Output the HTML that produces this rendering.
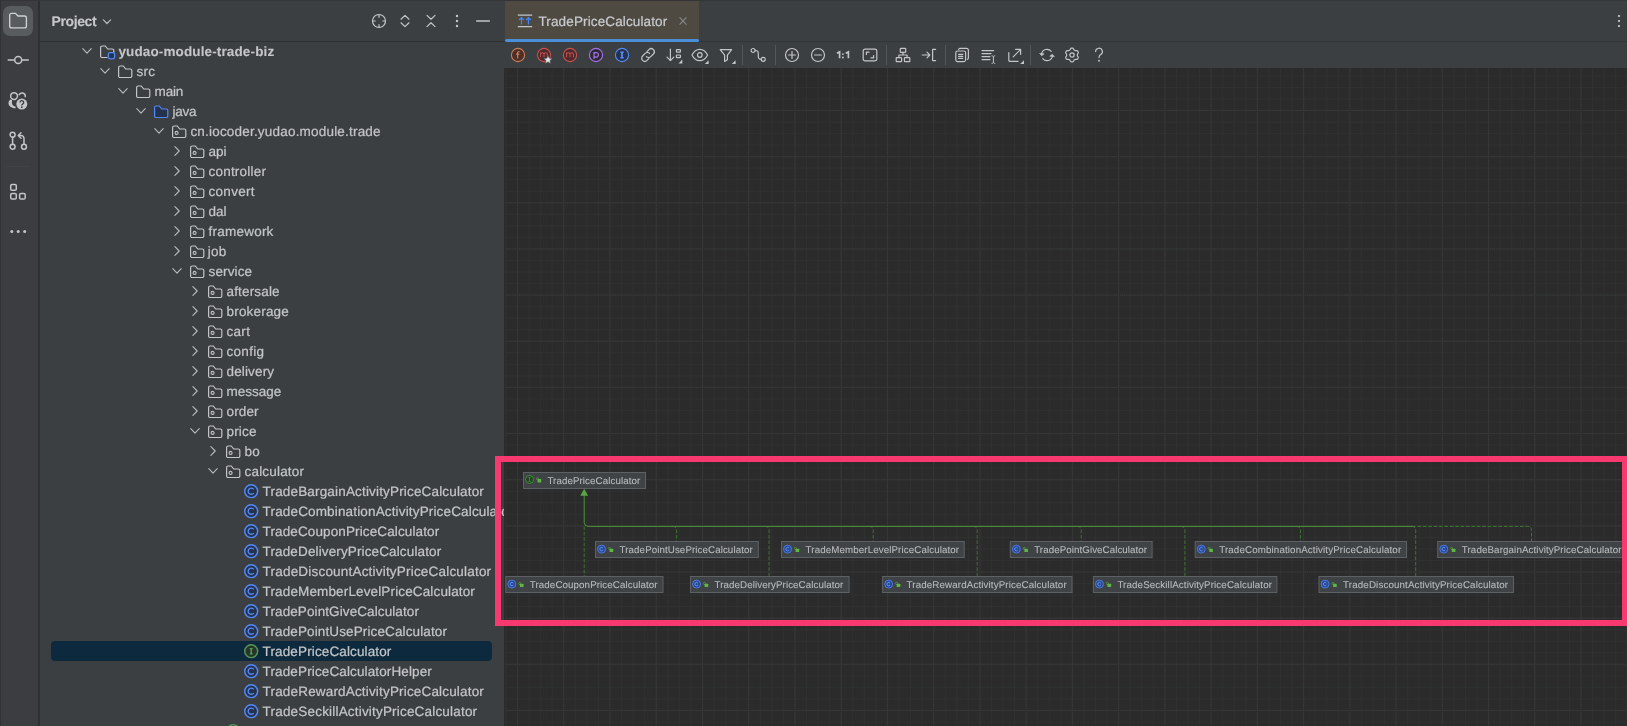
<!DOCTYPE html>
<html><head><meta charset="utf-8"><title>TradePriceCalculator</title>
<style>
html,body{margin:0;padding:0;background:#2b2b2b;}
body{width:1627px;height:726px;position:relative;overflow:hidden;font-family:"Liberation Sans",sans-serif;font-size:13px;color:#c3c5c8;text-rendering:geometricPrecision;}
#root{position:absolute;left:0;top:0;width:1627px;height:726px;overflow:hidden;background:#2b2b2b;will-change:transform}
svg{overflow:visible}
.abs{position:absolute}
</style></head><body><div id="root">
<!-- editor canvas -->
<div class="abs" style="left:504px;top:68px;width:1123px;height:658px;background:#2b2b2b"></div>
<svg style="position:absolute;left:505px;top:68px" width="1122" height="658" viewBox="505 68 1122 658">
<defs>
<pattern id="gmin" x="517.0" y="110.0" width="11.56" height="11.5375" patternUnits="userSpaceOnUse">
<path d="M0.5 0 V11.5375" stroke="#2f3030" stroke-width="1"/><path d="M0 0.5 H11.56" stroke="#2f3030" stroke-width="1"/>
</pattern>
<pattern id="gmaj" x="517.0" y="110.0" width="46.24" height="46.15" patternUnits="userSpaceOnUse">
<path d="M0.5 0 V46.15" stroke="#3b3c3c" stroke-width="1" stroke-dasharray="1 1"/><path d="M0 0.5 H46.24" stroke="#3b3c3c" stroke-width="1" stroke-dasharray="1 1"/>
</pattern>
</defs>
<rect x="505" y="68" width="1122" height="658" fill="url(#gmin)"/>
<rect x="505" y="68" width="1122" height="658" fill="url(#gmaj)"/>
</svg>
<svg style="position:absolute;left:0;top:0" width="1627" height="726" viewBox="0 0 1627 726"><path d="M584.2 495 V522.4 Q584.2 526.4 588.2 526.4 H1412" fill="none" stroke="#4a9539" stroke-width="1"/><path d="M1412 526.4 H1527.5 Q1531.5 526.4 1531.5 530.4 V541.5" fill="none" stroke="#4a9539" stroke-width="0.95" stroke-opacity="0.72" stroke-dasharray="3.7 1.7"/><path d="M584.2 526.4 V576" fill="none" stroke="#4a9539" stroke-width="0.95" stroke-opacity="0.72" stroke-dasharray="3.7 1.7"/><path d="M672.6 526.4 Q676.6 526.4 676.6 530.4 V541.5" fill="none" stroke="#4a9539" stroke-width="0.95" stroke-opacity="0.72" stroke-dasharray="3.7 1.7"/><path d="M765.1 526.4 Q769.1 526.4 769.1 530.4 V576" fill="none" stroke="#4a9539" stroke-width="0.95" stroke-opacity="0.72" stroke-dasharray="3.7 1.7"/><path d="M869.2 526.4 Q873.2 526.4 873.2 530.4 V541.5" fill="none" stroke="#4a9539" stroke-width="0.95" stroke-opacity="0.72" stroke-dasharray="3.7 1.7"/><path d="M973.2 526.4 Q977.2 526.4 977.2 530.4 V576" fill="none" stroke="#4a9539" stroke-width="0.95" stroke-opacity="0.72" stroke-dasharray="3.7 1.7"/><path d="M1077.2 526.4 Q1081.2 526.4 1081.2 530.4 V541.5" fill="none" stroke="#4a9539" stroke-width="0.95" stroke-opacity="0.72" stroke-dasharray="3.7 1.7"/><path d="M1180.9 526.4 Q1184.9 526.4 1184.9 530.4 V576" fill="none" stroke="#4a9539" stroke-width="0.95" stroke-opacity="0.72" stroke-dasharray="3.7 1.7"/><path d="M1296.5 526.4 Q1300.5 526.4 1300.5 530.4 V541.5" fill="none" stroke="#4a9539" stroke-width="0.95" stroke-opacity="0.72" stroke-dasharray="3.7 1.7"/><path d="M1411.7 526.4 Q1415.7 526.4 1415.7 530.4 V576" fill="none" stroke="#4a9539" stroke-width="0.95" stroke-opacity="0.72" stroke-dasharray="3.7 1.7"/><path d="M584.2 488.8 L588.1 495.7 H580.3 Z" fill="#57a642"/><rect x="523.50" y="472.5" width="122.00" height="16" fill="#404345" stroke="#5e6164" stroke-width="1"/><g transform="translate(524.55 474.40)"><circle cx="5" cy="5" r="4" fill="#274028" stroke="#45913e" stroke-width="0.9"/><path d="M4 3 h2 M4 7 h2 M5 3 v4" fill="none" stroke="#45913e" stroke-width="0.85"/></g><g transform="translate(536.00 477.20)"><circle cx="1.45" cy="1.5" r="1.05" fill="none" stroke="#4f9a3c" stroke-width="0.8"/><rect x="1.6" y="1.9" width="3.6" height="3.3" rx="0.4" fill="#5db645"/></g><rect x="595.50" y="541.5" width="162.80" height="16" fill="#404345" stroke="#5e6164" stroke-width="1"/><g transform="translate(596.55 544.10)"><circle cx="5" cy="5" r="4" fill="#2a4a9a" stroke="#4a78d8" stroke-width="1"/><path d="M6.35 4 a1.7 1.7 0 1 0 0 2" fill="none" stroke="#6f9cf0" stroke-width="0.85"/></g><g transform="translate(608.00 546.90)"><circle cx="1.45" cy="1.5" r="1.05" fill="none" stroke="#4f9a3c" stroke-width="0.8"/><rect x="1.6" y="1.9" width="3.6" height="3.3" rx="0.4" fill="#5db645"/></g><rect x="781.50" y="541.5" width="182.70" height="16" fill="#404345" stroke="#5e6164" stroke-width="1"/><g transform="translate(782.55 544.10)"><circle cx="5" cy="5" r="4" fill="#2a4a9a" stroke="#4a78d8" stroke-width="1"/><path d="M6.35 4 a1.7 1.7 0 1 0 0 2" fill="none" stroke="#6f9cf0" stroke-width="0.85"/></g><g transform="translate(794.00 546.90)"><circle cx="1.45" cy="1.5" r="1.05" fill="none" stroke="#4f9a3c" stroke-width="0.8"/><rect x="1.6" y="1.9" width="3.6" height="3.3" rx="0.4" fill="#5db645"/></g><rect x="1010.30" y="541.5" width="141.80" height="16" fill="#404345" stroke="#5e6164" stroke-width="1"/><g transform="translate(1011.35 544.10)"><circle cx="5" cy="5" r="4" fill="#2a4a9a" stroke="#4a78d8" stroke-width="1"/><path d="M6.35 4 a1.7 1.7 0 1 0 0 2" fill="none" stroke="#6f9cf0" stroke-width="0.85"/></g><g transform="translate(1022.80 546.90)"><circle cx="1.45" cy="1.5" r="1.05" fill="none" stroke="#4f9a3c" stroke-width="0.8"/><rect x="1.6" y="1.9" width="3.6" height="3.3" rx="0.4" fill="#5db645"/></g><rect x="1195.20" y="541.5" width="211.30" height="16" fill="#404345" stroke="#5e6164" stroke-width="1"/><g transform="translate(1196.25 544.10)"><circle cx="5" cy="5" r="4" fill="#2a4a9a" stroke="#4a78d8" stroke-width="1"/><path d="M6.35 4 a1.7 1.7 0 1 0 0 2" fill="none" stroke="#6f9cf0" stroke-width="0.85"/></g><g transform="translate(1207.70 546.90)"><circle cx="1.45" cy="1.5" r="1.05" fill="none" stroke="#4f9a3c" stroke-width="0.8"/><rect x="1.6" y="1.9" width="3.6" height="3.3" rx="0.4" fill="#5db645"/></g><rect x="1437.70" y="541.5" width="193.80" height="16" fill="#404345" stroke="#5e6164" stroke-width="1"/><g transform="translate(1438.75 544.10)"><circle cx="5" cy="5" r="4" fill="#2a4a9a" stroke="#4a78d8" stroke-width="1"/><path d="M6.35 4 a1.7 1.7 0 1 0 0 2" fill="none" stroke="#6f9cf0" stroke-width="0.85"/></g><g transform="translate(1450.20 546.90)"><circle cx="1.45" cy="1.5" r="1.05" fill="none" stroke="#4f9a3c" stroke-width="0.8"/><rect x="1.6" y="1.9" width="3.6" height="3.3" rx="0.4" fill="#5db645"/></g><rect x="505.80" y="576.5" width="157.20" height="16" fill="#404345" stroke="#5e6164" stroke-width="1"/><g transform="translate(506.85 579.10)"><circle cx="5" cy="5" r="4" fill="#2a4a9a" stroke="#4a78d8" stroke-width="1"/><path d="M6.35 4 a1.7 1.7 0 1 0 0 2" fill="none" stroke="#6f9cf0" stroke-width="0.85"/></g><g transform="translate(518.30 581.90)"><circle cx="1.45" cy="1.5" r="1.05" fill="none" stroke="#4f9a3c" stroke-width="0.8"/><rect x="1.6" y="1.9" width="3.6" height="3.3" rx="0.4" fill="#5db645"/></g><rect x="690.50" y="576.5" width="158.60" height="16" fill="#404345" stroke="#5e6164" stroke-width="1"/><g transform="translate(691.55 579.10)"><circle cx="5" cy="5" r="4" fill="#2a4a9a" stroke="#4a78d8" stroke-width="1"/><path d="M6.35 4 a1.7 1.7 0 1 0 0 2" fill="none" stroke="#6f9cf0" stroke-width="0.85"/></g><g transform="translate(703.00 581.90)"><circle cx="1.45" cy="1.5" r="1.05" fill="none" stroke="#4f9a3c" stroke-width="0.8"/><rect x="1.6" y="1.9" width="3.6" height="3.3" rx="0.4" fill="#5db645"/></g><rect x="882.60" y="576.5" width="189.40" height="16" fill="#404345" stroke="#5e6164" stroke-width="1"/><g transform="translate(883.65 579.10)"><circle cx="5" cy="5" r="4" fill="#2a4a9a" stroke="#4a78d8" stroke-width="1"/><path d="M6.35 4 a1.7 1.7 0 1 0 0 2" fill="none" stroke="#6f9cf0" stroke-width="0.85"/></g><g transform="translate(895.10 581.90)"><circle cx="1.45" cy="1.5" r="1.05" fill="none" stroke="#4f9a3c" stroke-width="0.8"/><rect x="1.6" y="1.9" width="3.6" height="3.3" rx="0.4" fill="#5db645"/></g><rect x="1093.40" y="576.5" width="183.50" height="16" fill="#404345" stroke="#5e6164" stroke-width="1"/><g transform="translate(1094.45 579.10)"><circle cx="5" cy="5" r="4" fill="#2a4a9a" stroke="#4a78d8" stroke-width="1"/><path d="M6.35 4 a1.7 1.7 0 1 0 0 2" fill="none" stroke="#6f9cf0" stroke-width="0.85"/></g><g transform="translate(1105.90 581.90)"><circle cx="1.45" cy="1.5" r="1.05" fill="none" stroke="#4f9a3c" stroke-width="0.8"/><rect x="1.6" y="1.9" width="3.6" height="3.3" rx="0.4" fill="#5db645"/></g><rect x="1319.00" y="576.5" width="194.50" height="16" fill="#404345" stroke="#5e6164" stroke-width="1"/><g transform="translate(1320.05 579.10)"><circle cx="5" cy="5" r="4" fill="#2a4a9a" stroke="#4a78d8" stroke-width="1"/><path d="M6.35 4 a1.7 1.7 0 1 0 0 2" fill="none" stroke="#6f9cf0" stroke-width="0.85"/></g><g transform="translate(1331.50 581.90)"><circle cx="1.45" cy="1.5" r="1.05" fill="none" stroke="#4f9a3c" stroke-width="0.8"/><rect x="1.6" y="1.9" width="3.6" height="3.3" rx="0.4" fill="#5db645"/></g></svg>

<span style="position:absolute;left:547.4px;top:472.10px;line-height:20px;height:20px;font-size:9.75px;font-weight:400;color:#b6b9bd;letter-spacing:0.084px;white-space:pre;-webkit-text-stroke:0.1px #b6b9bd">TradePriceCalculator</span><span style="position:absolute;left:619.6px;top:541.10px;line-height:20px;height:20px;font-size:9.75px;font-weight:400;color:#b6b9bd;letter-spacing:0.086px;white-space:pre;-webkit-text-stroke:0.1px #b6b9bd">TradePointUsePriceCalculator</span><span style="position:absolute;left:805.6px;top:541.10px;line-height:20px;height:20px;font-size:9.75px;font-weight:400;color:#b6b9bd;letter-spacing:0.107px;white-space:pre;-webkit-text-stroke:0.1px #b6b9bd">TradeMemberLevelPriceCalculator</span><span style="position:absolute;left:1034.2px;top:541.10px;line-height:20px;height:20px;font-size:9.75px;font-weight:400;color:#b6b9bd;letter-spacing:0.072px;white-space:pre;-webkit-text-stroke:0.1px #b6b9bd">TradePointGiveCalculator</span><span style="position:absolute;left:1219.2px;top:541.10px;line-height:20px;height:20px;font-size:9.75px;font-weight:400;color:#b6b9bd;letter-spacing:0.135px;white-space:pre;-webkit-text-stroke:0.1px #b6b9bd">TradeCombinationActivityPriceCalculator</span><span style="position:absolute;left:1461.8px;top:541.10px;line-height:20px;height:20px;font-size:9.75px;font-weight:400;color:#b6b9bd;letter-spacing:0.117px;white-space:pre;-webkit-text-stroke:0.1px #b6b9bd">TradeBargainActivityPriceCalculator</span><span style="position:absolute;left:529.8px;top:576.10px;line-height:20px;height:20px;font-size:9.75px;font-weight:400;color:#b6b9bd;letter-spacing:0.097px;white-space:pre;-webkit-text-stroke:0.1px #b6b9bd">TradeCouponPriceCalculator</span><span style="position:absolute;left:714.5px;top:576.10px;line-height:20px;height:20px;font-size:9.75px;font-weight:400;color:#b6b9bd;letter-spacing:0.088px;white-space:pre;-webkit-text-stroke:0.1px #b6b9bd">TradeDeliveryPriceCalculator</span><span style="position:absolute;left:906.6px;top:576.10px;line-height:20px;height:20px;font-size:9.75px;font-weight:400;color:#b6b9bd;letter-spacing:0.132px;white-space:pre;-webkit-text-stroke:0.1px #b6b9bd">TradeRewardActivityPriceCalculator</span><span style="position:absolute;left:1117.4px;top:576.10px;line-height:20px;height:20px;font-size:9.75px;font-weight:400;color:#b6b9bd;letter-spacing:0.126px;white-space:pre;-webkit-text-stroke:0.1px #b6b9bd">TradeSeckillActivityPriceCalculator</span><span style="position:absolute;left:1343.1px;top:576.10px;line-height:20px;height:20px;font-size:9.75px;font-weight:400;color:#b6b9bd;letter-spacing:0.141px;white-space:pre;-webkit-text-stroke:0.1px #b6b9bd">TradeDiscountActivityPriceCalculator</span>
<!-- top bars -->
<div class="abs" style="left:504px;top:0;width:1123px;height:68px;background:#3c3f41"></div>
<div class="abs" style="left:504px;top:41px;width:1123px;height:1px;background:#323537"></div>
<div style="position:absolute;left:505px;top:1px;width:194px;height:39px;background:#4e4a41"></div><div style="position:absolute;left:505px;top:38.6px;width:194px;height:3.2px;border-radius:1.6px;background:#4a8fd8"></div><svg style="position:absolute;left:517px;top:13px" width="16" height="16" viewBox="0 0 16 16"><path d="M0.8 2.1 h14.4 M0.8 13.6 h14.4" stroke="#c3c5c8" stroke-width="1.1"/><path d="M4.45 11.6 v-6.6 M11.45 11.6 v-6.6 M2.05 7 l2.4 -2.4 l2.4 2.4 M9.05 7 l2.4 -2.4 l2.4 2.4" fill="none" stroke="#4486f2" stroke-width="1.2"/></svg><svg style="position:absolute;left:678px;top:15.7px" width="10" height="10" viewBox="0 0 10 10"><path d="M1.6 1.4 L8.4 8.6 M8.4 1.4 L1.6 8.6" stroke="#85888c" stroke-width="1.1"/></svg><svg style="position:absolute;left:1611px;top:12.6px" width="16" height="16" viewBox="0 0 16 16"><circle cx="8" cy="3" r="1.1" fill="#d0d2d5"/><circle cx="8" cy="8" r="1.1" fill="#d0d2d5"/><circle cx="8" cy="13" r="1.1" fill="#d0d2d5"/></svg>
<svg style="position:absolute;left:510px;top:46.6px" width="16" height="16" viewBox="0 0 16 16"><circle cx="8" cy="8" r="6.6" fill="#4d2f26" stroke="#c77d55" stroke-width="1.1"/><path d="M9.6 4.7 c-1.6 -0.5 -2 0.5 -2 1.4 v5.4 M6 7.2 h3.4" fill="none" stroke="#c77d55" stroke-width="1.25"/></svg><svg style="position:absolute;left:536px;top:46.6px" width="18" height="18" viewBox="0 0 18 18"><circle cx="8" cy="8" r="6.6" fill="#4d2a2b" stroke="#c9514f" stroke-width="1.1"/><path d="M4.6 10.3 v-4.8 M4.6 7.4 c0 -2.3 3.4 -2.3 3.4 0 v2.9 M8 7.4 c0 -2.3 3.4 -2.3 3.4 0 v2.9" fill="none" stroke="#c9514f" stroke-width="1.05"/><path transform="translate(12 12.6) scale(1.15) translate(-12 -12.6)" d="M12 8.8 L13.1 11.4 L15.9 11.6 L13.75 13.4 L14.45 16.1 L12 14.6 L9.55 16.1 L10.25 13.4 L8.1 11.6 L10.9 11.4 Z" fill="#e3e5e8" stroke="#3c3f41" stroke-width="0.5"/></svg><svg style="position:absolute;left:562px;top:46.6px" width="16" height="16" viewBox="0 0 16 16"><circle cx="8" cy="8" r="6.6" fill="#4d2a2b" stroke="#c9514f" stroke-width="1.1"/><path d="M4.6 10.3 v-4.8 M4.6 7.4 c0 -2.3 3.4 -2.3 3.4 0 v2.9 M8 7.4 c0 -2.3 3.4 -2.3 3.4 0 v2.9" fill="none" stroke="#c9514f" stroke-width="1.05"/></svg><svg style="position:absolute;left:588px;top:46.6px" width="16" height="16" viewBox="0 0 16 16"><circle cx="8" cy="8" r="6.6" fill="#2f2936" stroke="#a571e6" stroke-width="1.1"/><path d="M6 12 v-7 M6 7 a2.3 2.3 0 1 1 0 1.8" fill="none" stroke="#a571e6" stroke-width="1.2"/></svg><svg style="position:absolute;left:614px;top:46.6px" width="16" height="16" viewBox="0 0 16 16"><circle cx="8" cy="8" r="6.6" fill="#25324d" stroke="#548af7" stroke-width="1.1"/><path d="M6.2 4.6 h3.6 v1 l-0.9 0.7 v3.4 l0.9 0.7 v1 h-3.6 v-1 l0.9 -0.7 v-3.4 l-0.9 -0.7 z" fill="#548af7"/></svg><svg style="position:absolute;left:640px;top:46.6px" width="16" height="16" viewBox="0 0 16 16"><path d="M7 4.6 l2 -2 a3.1 3.1 0 0 1 4.4 4.4 l-2.6 2.6 a3.1 3.1 0 0 1 -4.4 0" fill="none" stroke="#c3c5c8" stroke-width="1.2" stroke-linecap="round" stroke-linejoin="round"/><path d="M9 11.4 l-2 2 a3.1 3.1 0 0 1 -4.4 -4.4 l2.6 -2.6 a3.1 3.1 0 0 1 4.4 0" fill="none" stroke="#c3c5c8" stroke-width="1.2" stroke-linecap="round" stroke-linejoin="round"/></svg><svg style="position:absolute;left:666px;top:46.6px" width="18" height="18" viewBox="0 0 18 18"><path d="M4.4 2.2 v11.4 M1 10.2 l3.4 3.5 l3.4 -3.5" fill="none" stroke="#c3c5c8" stroke-width="1.2" stroke-linecap="round" stroke-linejoin="round"/><rect x="10.4" y="2.6" width="4" height="2.6" rx="0.6" fill="none" stroke="#c3c5c8" stroke-width="1.2" stroke-linecap="round" stroke-linejoin="round"/><rect x="10.4" y="8" width="4" height="2.6" rx="0.6" fill="none" stroke="#c3c5c8" stroke-width="1.2" stroke-linecap="round" stroke-linejoin="round"/><path d="M16.3 12.6 v3.8 h-3.8 z" fill="#c3c5c8"/></svg><svg style="position:absolute;left:691px;top:46.6px" width="18" height="18" viewBox="0 0 18 18"><path d="M1 8 C3 4 6 2.3 8.8 2.3 C11.6 2.3 14.6 4 16.6 8 C14.6 12 11.6 13.7 8.8 13.7 C6 13.7 3 12 1 8 Z" fill="none" stroke="#c3c5c8" stroke-width="1.2" stroke-linecap="round" stroke-linejoin="round"/><circle cx="8.8" cy="8" r="2.3" fill="none" stroke="#c3c5c8" stroke-width="1.2" stroke-linecap="round" stroke-linejoin="round"/><path d="M17.6 13.2 v3.8 h-3.8 z" fill="#c3c5c8"/></svg><svg style="position:absolute;left:718px;top:46.6px" width="18" height="18" viewBox="0 0 18 18"><path d="M2.2 2.6 h11.4 l-4.2 5.6 v4.6 l-2.8 1.6 v-6.2 z" fill="none" stroke="#c3c5c8" stroke-width="1.2" stroke-linecap="round" stroke-linejoin="round"/><path d="M17.6 13.2 v3.8 h-3.8 z" fill="#c3c5c8"/></svg><div style="position:absolute;left:741.9px;top:45px;width:1px;height:19.5px;background:#52555a"></div><svg style="position:absolute;left:750px;top:46.6px" width="16" height="16" viewBox="0 0 16 16"><circle cx="3.1" cy="3.5" r="2" fill="none" stroke="#c3c5c8" stroke-width="1.2" stroke-linecap="round" stroke-linejoin="round"/><circle cx="13.2" cy="12.3" r="2" fill="none" stroke="#c3c5c8" stroke-width="1.2" stroke-linecap="round" stroke-linejoin="round"/><path d="M5.1 3.5 c3.4 0 3.2 1.6 3.2 4.4 c0 2.8 -0.2 4.4 2.9 4.4" fill="none" stroke="#c3c5c8" stroke-width="1.2" stroke-linecap="round" stroke-linejoin="round"/></svg><div style="position:absolute;left:774.7px;top:45px;width:1px;height:19.5px;background:#52555a"></div><svg style="position:absolute;left:783.7px;top:46.6px" width="16" height="16" viewBox="0 0 16 16"><circle cx="8" cy="8" r="6.5" fill="none" stroke="#c3c5c8" stroke-width="1.2" stroke-linecap="round" stroke-linejoin="round"/><path d="M8 4.6 v6.8 M4.6 8 h6.8" fill="none" stroke="#c3c5c8" stroke-width="1.2" stroke-linecap="round" stroke-linejoin="round"/></svg><svg style="position:absolute;left:809.7px;top:46.6px" width="16" height="16" viewBox="0 0 16 16"><circle cx="8" cy="8" r="6.5" fill="none" stroke="#c3c5c8" stroke-width="1.2" stroke-linecap="round" stroke-linejoin="round"/><path d="M4.6 8 h6.8" fill="none" stroke="#c3c5c8" stroke-width="1.2" stroke-linecap="round" stroke-linejoin="round"/></svg><svg style="position:absolute;left:835px;top:48px" width="17" height="12" viewBox="0 0 17 12"><path d="M1.9 5.3 L4.6 3.9 V10.3 M10.7 5.3 L13.4 3.9 V10.3" fill="none" stroke="#c3c5c8" stroke-width="1.65" stroke-linejoin="miter"/><circle cx="7.9" cy="6.1" r="0.95" fill="#c3c5c8"/><circle cx="7.9" cy="9.5" r="0.95" fill="#c3c5c8"/></svg><svg style="position:absolute;left:861.8px;top:46.6px" width="16" height="16" viewBox="0 0 16 16"><rect x="1.2" y="2.2" width="13.6" height="11.6" rx="1.8" fill="none" stroke="#c3c5c8" stroke-width="1.2" stroke-linecap="round" stroke-linejoin="round"/><path d="M4.4 7.4 v-2.2 h2.6 M9 10.8 h2.6 v-2.2" fill="none" stroke="#c3c5c8" stroke-width="1.2" stroke-linecap="round" stroke-linejoin="round"/></svg><div style="position:absolute;left:886.0px;top:45px;width:1px;height:19.5px;background:#52555a"></div><svg style="position:absolute;left:894.7px;top:46.6px" width="16" height="16" viewBox="0 0 16 16"><rect x="5.3" y="1.4" width="5.4" height="4" rx="0.6" fill="none" stroke="#c3c5c8" stroke-width="1.2" stroke-linecap="round" stroke-linejoin="round"/><rect x="1.2" y="10.6" width="5.4" height="4" rx="0.6" fill="none" stroke="#c3c5c8" stroke-width="1.2" stroke-linecap="round" stroke-linejoin="round"/><rect x="9.4" y="10.6" width="5.4" height="4" rx="0.6" fill="none" stroke="#c3c5c8" stroke-width="1.2" stroke-linecap="round" stroke-linejoin="round"/><path d="M8 5.4 v2.6 M3.9 10.6 v-2.6 h8.2 v2.6" fill="none" stroke="#c3c5c8" stroke-width="1.2" stroke-linecap="round" stroke-linejoin="round"/></svg><svg style="position:absolute;left:921px;top:46.6px" width="16" height="16" viewBox="0 0 16 16"><path d="M1.2 8 h7.4 M6 5.2 l2.8 2.8 l-2.8 2.8" fill="none" stroke="#c3c5c8" stroke-width="1.2" stroke-linecap="round" stroke-linejoin="round"/><path d="M14.6 2.4 h-3 v11.2 h3" fill="none" stroke="#c3c5c8" stroke-width="1.2" stroke-linecap="round" stroke-linejoin="round"/></svg><div style="position:absolute;left:944.8px;top:45px;width:1px;height:19.5px;background:#52555a"></div><svg style="position:absolute;left:953.8px;top:46.6px" width="16" height="16" viewBox="0 0 16 16"><rect x="1.8" y="4" width="9.8" height="10.6" rx="1.8" fill="none" stroke="#c3c5c8" stroke-width="1.2" stroke-linecap="round" stroke-linejoin="round"/><path d="M4.6 2.4 a1.6 1.6 0 0 1 1.4 -1 h6.4 a2 2 0 0 1 2 2 v7.6 a1.6 1.6 0 0 1 -1 1.4" fill="none" stroke="#c3c5c8" stroke-width="1.2" stroke-linecap="round" stroke-linejoin="round"/><path d="M4.6 7.4 h4.2 M4.6 9.4 h4.2 M4.6 11.4 h4.2" fill="none" stroke="#c3c5c8" stroke-width="1.2" stroke-linecap="round" stroke-linejoin="round"/></svg><svg style="position:absolute;left:980.6px;top:47.6px" width="16" height="16" viewBox="0 0 16 16"><path d="M1 2.6 h11.6 M1 5.6 h9 M1 8.6 h8 M1 11.6 h8" fill="none" stroke="#c3c5c8" stroke-width="1.2" stroke-linecap="round" stroke-linejoin="round"/><path d="M10.6 7.8 c1.2 0 1.8 0.4 1.8 1.2 c0 -0.8 0.6 -1.2 1.8 -1.2 M10.6 15.4 c1.2 0 1.8 -0.4 1.8 -1.2 c0 0.8 0.6 1.2 1.8 1.2 M12.4 9 v5.2" fill="none" stroke="#c3c5c8" stroke-width="1"/></svg><svg style="position:absolute;left:1006.5px;top:46.6px" width="18" height="18" viewBox="0 0 18 18"><path d="M1.8 5.6 v7.6 a1.2 1.2 0 0 0 1.2 1.2 h8" fill="none" stroke="#c3c5c8" stroke-width="1.2" stroke-linecap="round" stroke-linejoin="round"/><path d="M6.2 9.8 l7.2 -7.2 M8.6 2.4 h5 v5" fill="none" stroke="#c3c5c8" stroke-width="1.2" stroke-linecap="round" stroke-linejoin="round"/><path d="M17 13.2 v3.8 h-3.8 z" fill="#c3c5c8"/></svg><div style="position:absolute;left:1029.9px;top:45px;width:1px;height:19.5px;background:#52555a"></div><svg style="position:absolute;left:1038.6px;top:46.6px" width="16" height="16" viewBox="0 0 16 16"><path d="M2.6 7 a5.4 5.4 0 0 1 9.6 -2.6 M13.4 9 a5.4 5.4 0 0 1 -9.6 2.6" fill="none" stroke="#c3c5c8" stroke-width="1.2" stroke-linecap="round" stroke-linejoin="round"/><path d="M0.6 6.4 l2.1 2.4 l2.5 -2 z M15.4 9.6 l-2.1 -2.4 l-2.5 2 z" fill="#c3c5c8" stroke="#c3c5c8" stroke-width="0.6" stroke-linejoin="round"/></svg><svg style="position:absolute;left:1064.4px;top:46.7px" width="16" height="16" viewBox="0 0 16 16"><path d="M13.40 8.00 L13.40 8.24 L13.40 8.47 L13.43 8.71 L13.50 8.97 L13.67 9.26 L13.94 9.59 L14.19 9.95 L14.31 10.30 L14.31 10.61 L14.23 10.91 L14.12 11.18 L13.98 11.45 L13.81 11.70 L13.63 11.94 L13.42 12.16 L13.15 12.32 L12.79 12.39 L12.35 12.35 L11.92 12.28 L11.59 12.28 L11.33 12.34 L11.11 12.44 L10.90 12.56 L10.70 12.68 L10.50 12.79 L10.29 12.92 L10.09 13.06 L9.91 13.25 L9.75 13.54 L9.59 13.94 L9.41 14.34 L9.17 14.62 L8.89 14.77 L8.60 14.85 L8.30 14.89 L8.00 14.90 L7.70 14.89 L7.40 14.85 L7.11 14.77 L6.83 14.62 L6.59 14.34 L6.41 13.94 L6.25 13.54 L6.09 13.25 L5.91 13.06 L5.71 12.92 L5.50 12.79 L5.30 12.68 L5.10 12.56 L4.89 12.44 L4.67 12.34 L4.41 12.28 L4.08 12.28 L3.65 12.35 L3.21 12.39 L2.85 12.32 L2.58 12.16 L2.37 11.94 L2.19 11.70 L2.02 11.45 L1.88 11.18 L1.77 10.91 L1.69 10.61 L1.69 10.30 L1.81 9.95 L2.06 9.59 L2.33 9.26 L2.50 8.97 L2.57 8.71 L2.60 8.47 L2.60 8.24 L2.60 8.00 L2.60 7.76 L2.60 7.53 L2.57 7.29 L2.50 7.03 L2.33 6.74 L2.06 6.41 L1.81 6.05 L1.69 5.70 L1.69 5.39 L1.77 5.09 L1.88 4.82 L2.02 4.55 L2.19 4.30 L2.37 4.06 L2.58 3.84 L2.85 3.68 L3.21 3.61 L3.65 3.65 L4.08 3.72 L4.41 3.72 L4.67 3.66 L4.89 3.56 L5.10 3.44 L5.30 3.32 L5.50 3.21 L5.71 3.08 L5.91 2.94 L6.09 2.75 L6.25 2.46 L6.41 2.06 L6.59 1.66 L6.83 1.38 L7.11 1.23 L7.40 1.15 L7.70 1.11 L8.00 1.10 L8.30 1.11 L8.60 1.15 L8.89 1.23 L9.17 1.38 L9.41 1.66 L9.59 2.06 L9.75 2.46 L9.91 2.75 L10.09 2.94 L10.29 3.08 L10.50 3.21 L10.70 3.32 L10.90 3.44 L11.11 3.56 L11.33 3.66 L11.59 3.72 L11.92 3.72 L12.35 3.65 L12.79 3.61 L13.15 3.68 L13.42 3.84 L13.63 4.06 L13.81 4.30 L13.98 4.55 L14.12 4.82 L14.23 5.09 L14.31 5.39 L14.31 5.70 L14.19 6.05 L13.94 6.41 L13.67 6.74 L13.50 7.03 L13.43 7.29 L13.40 7.53 L13.40 7.76 Z" fill="none" stroke="#c3c5c8" stroke-width="1.2" stroke-linecap="round" stroke-linejoin="round"/><circle cx="8" cy="8" r="2.2" fill="none" stroke="#c3c5c8" stroke-width="1.2" stroke-linecap="round" stroke-linejoin="round"/></svg><svg style="position:absolute;left:1090.7px;top:46.8px" width="16" height="16" viewBox="0 0 16 16"><path d="M4.6 4.6 a3.4 3.4 0 1 1 5 3 c-1.2 0.7 -1.6 1.3 -1.6 3" fill="none" stroke="#c3c5c8" stroke-width="1.2" stroke-linecap="round" stroke-linejoin="round"/><circle cx="8" cy="13.8" r="0.95" fill="#c3c5c8"/></svg>
<!-- project panel -->
<div class="abs" style="left:40px;top:0;width:464px;height:726px;background:#3c3f41;overflow:hidden">
 <div class="abs" style="left:-40px;top:0;width:544px;height:726px">
 <svg style="position:absolute;left:80.7px;top:45.1px" width="12" height="12" viewBox="0 0 12 12"><path d="M1.8 3.7 L6 8.1 L10.2 3.7" fill="none" stroke="#b4b8bf" stroke-width="1.15" stroke-linecap="round" stroke-linejoin="round"/></svg><svg style="position:absolute;left:100px;top:45.4px" width="16" height="16" viewBox="0 0 16 16"><path d="M7.4 12.5 h-5.3 a1.5 1.5 0 0 1 -1.5 -1.5 v-8.5 a1.5 1.5 0 0 1 1.5 -1.5 h3.2 l2.4 3 h4.6 a1.5 1.5 0 0 1 1.5 1.5 v2" fill="none" stroke="#c3c5c8" stroke-width="1.2"/><rect x="8.4" y="7.6" width="6.2" height="6.2" rx="1.8" fill="#25324d" stroke="#548af7" stroke-width="1.3"/></svg><svg style="position:absolute;left:98.6px;top:65.1px" width="12" height="12" viewBox="0 0 12 12"><path d="M1.8 3.7 L6 8.1 L10.2 3.7" fill="none" stroke="#b4b8bf" stroke-width="1.15" stroke-linecap="round" stroke-linejoin="round"/></svg><svg style="position:absolute;left:118px;top:65.4px" width="16" height="16" viewBox="0 0 16 16"><path d="M0.6 2.5 a1.5 1.5 0 0 1 1.5 -1.5 h3.2 l2.4 3 h4.6 a1.5 1.5 0 0 1 1.5 1.5 v5.5 a1.5 1.5 0 0 1 -1.5 1.5 h-10.2 a1.5 1.5 0 0 1 -1.5 -1.5 z" fill="none" stroke="#c3c5c8" stroke-width="1.2"/></svg><svg style="position:absolute;left:116.6px;top:85.1px" width="12" height="12" viewBox="0 0 12 12"><path d="M1.8 3.7 L6 8.1 L10.2 3.7" fill="none" stroke="#b4b8bf" stroke-width="1.15" stroke-linecap="round" stroke-linejoin="round"/></svg><svg style="position:absolute;left:136px;top:85.4px" width="16" height="16" viewBox="0 0 16 16"><path d="M0.6 2.5 a1.5 1.5 0 0 1 1.5 -1.5 h3.2 l2.4 3 h4.6 a1.5 1.5 0 0 1 1.5 1.5 v5.5 a1.5 1.5 0 0 1 -1.5 1.5 h-10.2 a1.5 1.5 0 0 1 -1.5 -1.5 z" fill="none" stroke="#c3c5c8" stroke-width="1.2"/></svg><svg style="position:absolute;left:134.6px;top:105.1px" width="12" height="12" viewBox="0 0 12 12"><path d="M1.8 3.7 L6 8.1 L10.2 3.7" fill="none" stroke="#b4b8bf" stroke-width="1.15" stroke-linecap="round" stroke-linejoin="round"/></svg><svg style="position:absolute;left:154px;top:105.4px" width="16" height="16" viewBox="0 0 16 16"><path d="M0.6 2.5 a1.5 1.5 0 0 1 1.5 -1.5 h3.2 l2.4 3 h4.6 a1.5 1.5 0 0 1 1.5 1.5 v5.5 a1.5 1.5 0 0 1 -1.5 1.5 h-10.2 a1.5 1.5 0 0 1 -1.5 -1.5 z" fill="#25324d" stroke="#548af7" stroke-width="1.2"/></svg><svg style="position:absolute;left:152.6px;top:125.1px" width="12" height="12" viewBox="0 0 12 12"><path d="M1.8 3.7 L6 8.1 L10.2 3.7" fill="none" stroke="#b4b8bf" stroke-width="1.15" stroke-linecap="round" stroke-linejoin="round"/></svg><svg style="position:absolute;left:172.3px;top:125.4px" width="16" height="16" viewBox="0 0 16 16"><path d="M0.6 2.5 a1.5 1.5 0 0 1 1.5 -1.5 h3.2 l2.4 3 h4.6 a1.5 1.5 0 0 1 1.5 1.5 v5.5 a1.5 1.5 0 0 1 -1.5 1.5 h-10.2 a1.5 1.5 0 0 1 -1.5 -1.5 z" fill="none" stroke="#c3c5c8" stroke-width="1.2"/><circle cx="4.6" cy="7.9" r="1.5" fill="none" stroke="#c3c5c8" stroke-width="1.1"/></svg><svg style="position:absolute;left:170.7px;top:145.1px" width="12" height="12" viewBox="0 0 12 12"><path d="M3.9 1.6 L8.2 6 L3.9 10.4" fill="none" stroke="#b4b8bf" stroke-width="1.15" stroke-linecap="round" stroke-linejoin="round"/></svg><svg style="position:absolute;left:190.3px;top:145.4px" width="16" height="16" viewBox="0 0 16 16"><path d="M0.6 2.5 a1.5 1.5 0 0 1 1.5 -1.5 h3.2 l2.4 3 h4.6 a1.5 1.5 0 0 1 1.5 1.5 v5.5 a1.5 1.5 0 0 1 -1.5 1.5 h-10.2 a1.5 1.5 0 0 1 -1.5 -1.5 z" fill="none" stroke="#c3c5c8" stroke-width="1.2"/><circle cx="4.6" cy="7.9" r="1.5" fill="none" stroke="#c3c5c8" stroke-width="1.1"/></svg><svg style="position:absolute;left:170.7px;top:165.1px" width="12" height="12" viewBox="0 0 12 12"><path d="M3.9 1.6 L8.2 6 L3.9 10.4" fill="none" stroke="#b4b8bf" stroke-width="1.15" stroke-linecap="round" stroke-linejoin="round"/></svg><svg style="position:absolute;left:190.3px;top:165.4px" width="16" height="16" viewBox="0 0 16 16"><path d="M0.6 2.5 a1.5 1.5 0 0 1 1.5 -1.5 h3.2 l2.4 3 h4.6 a1.5 1.5 0 0 1 1.5 1.5 v5.5 a1.5 1.5 0 0 1 -1.5 1.5 h-10.2 a1.5 1.5 0 0 1 -1.5 -1.5 z" fill="none" stroke="#c3c5c8" stroke-width="1.2"/><circle cx="4.6" cy="7.9" r="1.5" fill="none" stroke="#c3c5c8" stroke-width="1.1"/></svg><svg style="position:absolute;left:170.7px;top:185.1px" width="12" height="12" viewBox="0 0 12 12"><path d="M3.9 1.6 L8.2 6 L3.9 10.4" fill="none" stroke="#b4b8bf" stroke-width="1.15" stroke-linecap="round" stroke-linejoin="round"/></svg><svg style="position:absolute;left:190.3px;top:185.4px" width="16" height="16" viewBox="0 0 16 16"><path d="M0.6 2.5 a1.5 1.5 0 0 1 1.5 -1.5 h3.2 l2.4 3 h4.6 a1.5 1.5 0 0 1 1.5 1.5 v5.5 a1.5 1.5 0 0 1 -1.5 1.5 h-10.2 a1.5 1.5 0 0 1 -1.5 -1.5 z" fill="none" stroke="#c3c5c8" stroke-width="1.2"/><circle cx="4.6" cy="7.9" r="1.5" fill="none" stroke="#c3c5c8" stroke-width="1.1"/></svg><svg style="position:absolute;left:170.7px;top:205.1px" width="12" height="12" viewBox="0 0 12 12"><path d="M3.9 1.6 L8.2 6 L3.9 10.4" fill="none" stroke="#b4b8bf" stroke-width="1.15" stroke-linecap="round" stroke-linejoin="round"/></svg><svg style="position:absolute;left:190.3px;top:205.4px" width="16" height="16" viewBox="0 0 16 16"><path d="M0.6 2.5 a1.5 1.5 0 0 1 1.5 -1.5 h3.2 l2.4 3 h4.6 a1.5 1.5 0 0 1 1.5 1.5 v5.5 a1.5 1.5 0 0 1 -1.5 1.5 h-10.2 a1.5 1.5 0 0 1 -1.5 -1.5 z" fill="none" stroke="#c3c5c8" stroke-width="1.2"/><circle cx="4.6" cy="7.9" r="1.5" fill="none" stroke="#c3c5c8" stroke-width="1.1"/></svg><svg style="position:absolute;left:170.7px;top:225.1px" width="12" height="12" viewBox="0 0 12 12"><path d="M3.9 1.6 L8.2 6 L3.9 10.4" fill="none" stroke="#b4b8bf" stroke-width="1.15" stroke-linecap="round" stroke-linejoin="round"/></svg><svg style="position:absolute;left:190.3px;top:225.4px" width="16" height="16" viewBox="0 0 16 16"><path d="M0.6 2.5 a1.5 1.5 0 0 1 1.5 -1.5 h3.2 l2.4 3 h4.6 a1.5 1.5 0 0 1 1.5 1.5 v5.5 a1.5 1.5 0 0 1 -1.5 1.5 h-10.2 a1.5 1.5 0 0 1 -1.5 -1.5 z" fill="none" stroke="#c3c5c8" stroke-width="1.2"/><circle cx="4.6" cy="7.9" r="1.5" fill="none" stroke="#c3c5c8" stroke-width="1.1"/></svg><svg style="position:absolute;left:170.7px;top:245.1px" width="12" height="12" viewBox="0 0 12 12"><path d="M3.9 1.6 L8.2 6 L3.9 10.4" fill="none" stroke="#b4b8bf" stroke-width="1.15" stroke-linecap="round" stroke-linejoin="round"/></svg><svg style="position:absolute;left:190.3px;top:245.4px" width="16" height="16" viewBox="0 0 16 16"><path d="M0.6 2.5 a1.5 1.5 0 0 1 1.5 -1.5 h3.2 l2.4 3 h4.6 a1.5 1.5 0 0 1 1.5 1.5 v5.5 a1.5 1.5 0 0 1 -1.5 1.5 h-10.2 a1.5 1.5 0 0 1 -1.5 -1.5 z" fill="none" stroke="#c3c5c8" stroke-width="1.2"/><circle cx="4.6" cy="7.9" r="1.5" fill="none" stroke="#c3c5c8" stroke-width="1.1"/></svg><svg style="position:absolute;left:170.7px;top:265.1px" width="12" height="12" viewBox="0 0 12 12"><path d="M1.8 3.7 L6 8.1 L10.2 3.7" fill="none" stroke="#b4b8bf" stroke-width="1.15" stroke-linecap="round" stroke-linejoin="round"/></svg><svg style="position:absolute;left:190.3px;top:265.4px" width="16" height="16" viewBox="0 0 16 16"><path d="M0.6 2.5 a1.5 1.5 0 0 1 1.5 -1.5 h3.2 l2.4 3 h4.6 a1.5 1.5 0 0 1 1.5 1.5 v5.5 a1.5 1.5 0 0 1 -1.5 1.5 h-10.2 a1.5 1.5 0 0 1 -1.5 -1.5 z" fill="none" stroke="#c3c5c8" stroke-width="1.2"/><circle cx="4.6" cy="7.9" r="1.5" fill="none" stroke="#c3c5c8" stroke-width="1.1"/></svg><svg style="position:absolute;left:188.7px;top:285.1px" width="12" height="12" viewBox="0 0 12 12"><path d="M3.9 1.6 L8.2 6 L3.9 10.4" fill="none" stroke="#b4b8bf" stroke-width="1.15" stroke-linecap="round" stroke-linejoin="round"/></svg><svg style="position:absolute;left:208.3px;top:285.4px" width="16" height="16" viewBox="0 0 16 16"><path d="M0.6 2.5 a1.5 1.5 0 0 1 1.5 -1.5 h3.2 l2.4 3 h4.6 a1.5 1.5 0 0 1 1.5 1.5 v5.5 a1.5 1.5 0 0 1 -1.5 1.5 h-10.2 a1.5 1.5 0 0 1 -1.5 -1.5 z" fill="none" stroke="#c3c5c8" stroke-width="1.2"/><circle cx="4.6" cy="7.9" r="1.5" fill="none" stroke="#c3c5c8" stroke-width="1.1"/></svg><svg style="position:absolute;left:188.7px;top:305.1px" width="12" height="12" viewBox="0 0 12 12"><path d="M3.9 1.6 L8.2 6 L3.9 10.4" fill="none" stroke="#b4b8bf" stroke-width="1.15" stroke-linecap="round" stroke-linejoin="round"/></svg><svg style="position:absolute;left:208.3px;top:305.4px" width="16" height="16" viewBox="0 0 16 16"><path d="M0.6 2.5 a1.5 1.5 0 0 1 1.5 -1.5 h3.2 l2.4 3 h4.6 a1.5 1.5 0 0 1 1.5 1.5 v5.5 a1.5 1.5 0 0 1 -1.5 1.5 h-10.2 a1.5 1.5 0 0 1 -1.5 -1.5 z" fill="none" stroke="#c3c5c8" stroke-width="1.2"/><circle cx="4.6" cy="7.9" r="1.5" fill="none" stroke="#c3c5c8" stroke-width="1.1"/></svg><svg style="position:absolute;left:188.7px;top:325.1px" width="12" height="12" viewBox="0 0 12 12"><path d="M3.9 1.6 L8.2 6 L3.9 10.4" fill="none" stroke="#b4b8bf" stroke-width="1.15" stroke-linecap="round" stroke-linejoin="round"/></svg><svg style="position:absolute;left:208.3px;top:325.4px" width="16" height="16" viewBox="0 0 16 16"><path d="M0.6 2.5 a1.5 1.5 0 0 1 1.5 -1.5 h3.2 l2.4 3 h4.6 a1.5 1.5 0 0 1 1.5 1.5 v5.5 a1.5 1.5 0 0 1 -1.5 1.5 h-10.2 a1.5 1.5 0 0 1 -1.5 -1.5 z" fill="none" stroke="#c3c5c8" stroke-width="1.2"/><circle cx="4.6" cy="7.9" r="1.5" fill="none" stroke="#c3c5c8" stroke-width="1.1"/></svg><svg style="position:absolute;left:188.7px;top:345.1px" width="12" height="12" viewBox="0 0 12 12"><path d="M3.9 1.6 L8.2 6 L3.9 10.4" fill="none" stroke="#b4b8bf" stroke-width="1.15" stroke-linecap="round" stroke-linejoin="round"/></svg><svg style="position:absolute;left:208.3px;top:345.4px" width="16" height="16" viewBox="0 0 16 16"><path d="M0.6 2.5 a1.5 1.5 0 0 1 1.5 -1.5 h3.2 l2.4 3 h4.6 a1.5 1.5 0 0 1 1.5 1.5 v5.5 a1.5 1.5 0 0 1 -1.5 1.5 h-10.2 a1.5 1.5 0 0 1 -1.5 -1.5 z" fill="none" stroke="#c3c5c8" stroke-width="1.2"/><circle cx="4.6" cy="7.9" r="1.5" fill="none" stroke="#c3c5c8" stroke-width="1.1"/></svg><svg style="position:absolute;left:188.7px;top:365.1px" width="12" height="12" viewBox="0 0 12 12"><path d="M3.9 1.6 L8.2 6 L3.9 10.4" fill="none" stroke="#b4b8bf" stroke-width="1.15" stroke-linecap="round" stroke-linejoin="round"/></svg><svg style="position:absolute;left:208.3px;top:365.4px" width="16" height="16" viewBox="0 0 16 16"><path d="M0.6 2.5 a1.5 1.5 0 0 1 1.5 -1.5 h3.2 l2.4 3 h4.6 a1.5 1.5 0 0 1 1.5 1.5 v5.5 a1.5 1.5 0 0 1 -1.5 1.5 h-10.2 a1.5 1.5 0 0 1 -1.5 -1.5 z" fill="none" stroke="#c3c5c8" stroke-width="1.2"/><circle cx="4.6" cy="7.9" r="1.5" fill="none" stroke="#c3c5c8" stroke-width="1.1"/></svg><svg style="position:absolute;left:188.7px;top:385.1px" width="12" height="12" viewBox="0 0 12 12"><path d="M3.9 1.6 L8.2 6 L3.9 10.4" fill="none" stroke="#b4b8bf" stroke-width="1.15" stroke-linecap="round" stroke-linejoin="round"/></svg><svg style="position:absolute;left:208.3px;top:385.4px" width="16" height="16" viewBox="0 0 16 16"><path d="M0.6 2.5 a1.5 1.5 0 0 1 1.5 -1.5 h3.2 l2.4 3 h4.6 a1.5 1.5 0 0 1 1.5 1.5 v5.5 a1.5 1.5 0 0 1 -1.5 1.5 h-10.2 a1.5 1.5 0 0 1 -1.5 -1.5 z" fill="none" stroke="#c3c5c8" stroke-width="1.2"/><circle cx="4.6" cy="7.9" r="1.5" fill="none" stroke="#c3c5c8" stroke-width="1.1"/></svg><svg style="position:absolute;left:188.7px;top:405.1px" width="12" height="12" viewBox="0 0 12 12"><path d="M3.9 1.6 L8.2 6 L3.9 10.4" fill="none" stroke="#b4b8bf" stroke-width="1.15" stroke-linecap="round" stroke-linejoin="round"/></svg><svg style="position:absolute;left:208.3px;top:405.4px" width="16" height="16" viewBox="0 0 16 16"><path d="M0.6 2.5 a1.5 1.5 0 0 1 1.5 -1.5 h3.2 l2.4 3 h4.6 a1.5 1.5 0 0 1 1.5 1.5 v5.5 a1.5 1.5 0 0 1 -1.5 1.5 h-10.2 a1.5 1.5 0 0 1 -1.5 -1.5 z" fill="none" stroke="#c3c5c8" stroke-width="1.2"/><circle cx="4.6" cy="7.9" r="1.5" fill="none" stroke="#c3c5c8" stroke-width="1.1"/></svg><svg style="position:absolute;left:188.7px;top:425.1px" width="12" height="12" viewBox="0 0 12 12"><path d="M1.8 3.7 L6 8.1 L10.2 3.7" fill="none" stroke="#b4b8bf" stroke-width="1.15" stroke-linecap="round" stroke-linejoin="round"/></svg><svg style="position:absolute;left:208.3px;top:425.4px" width="16" height="16" viewBox="0 0 16 16"><path d="M0.6 2.5 a1.5 1.5 0 0 1 1.5 -1.5 h3.2 l2.4 3 h4.6 a1.5 1.5 0 0 1 1.5 1.5 v5.5 a1.5 1.5 0 0 1 -1.5 1.5 h-10.2 a1.5 1.5 0 0 1 -1.5 -1.5 z" fill="none" stroke="#c3c5c8" stroke-width="1.2"/><circle cx="4.6" cy="7.9" r="1.5" fill="none" stroke="#c3c5c8" stroke-width="1.1"/></svg><svg style="position:absolute;left:206.7px;top:445.1px" width="12" height="12" viewBox="0 0 12 12"><path d="M3.9 1.6 L8.2 6 L3.9 10.4" fill="none" stroke="#b4b8bf" stroke-width="1.15" stroke-linecap="round" stroke-linejoin="round"/></svg><svg style="position:absolute;left:226.3px;top:445.4px" width="16" height="16" viewBox="0 0 16 16"><path d="M0.6 2.5 a1.5 1.5 0 0 1 1.5 -1.5 h3.2 l2.4 3 h4.6 a1.5 1.5 0 0 1 1.5 1.5 v5.5 a1.5 1.5 0 0 1 -1.5 1.5 h-10.2 a1.5 1.5 0 0 1 -1.5 -1.5 z" fill="none" stroke="#c3c5c8" stroke-width="1.2"/><circle cx="4.6" cy="7.9" r="1.5" fill="none" stroke="#c3c5c8" stroke-width="1.1"/></svg><svg style="position:absolute;left:206.7px;top:465.1px" width="12" height="12" viewBox="0 0 12 12"><path d="M1.8 3.7 L6 8.1 L10.2 3.7" fill="none" stroke="#b4b8bf" stroke-width="1.15" stroke-linecap="round" stroke-linejoin="round"/></svg><svg style="position:absolute;left:226.3px;top:465.4px" width="16" height="16" viewBox="0 0 16 16"><path d="M0.6 2.5 a1.5 1.5 0 0 1 1.5 -1.5 h3.2 l2.4 3 h4.6 a1.5 1.5 0 0 1 1.5 1.5 v5.5 a1.5 1.5 0 0 1 -1.5 1.5 h-10.2 a1.5 1.5 0 0 1 -1.5 -1.5 z" fill="none" stroke="#c3c5c8" stroke-width="1.2"/><circle cx="4.6" cy="7.9" r="1.5" fill="none" stroke="#c3c5c8" stroke-width="1.1"/></svg><svg style="position:absolute;left:243.9px;top:483.8px" width="14.4" height="14.4" viewBox="0 0 14.4 14.4"><circle cx="7.2" cy="7.2" r="6.45" fill="#25324d" stroke="#548af7" stroke-width="1.45"/><path d="M9.7 5.3 a3.1 3.1 0 1 0 0 3.8" fill="none" stroke="#548af7" stroke-width="1.35" stroke-linecap="butt"/></svg><svg style="position:absolute;left:243.9px;top:503.8px" width="14.4" height="14.4" viewBox="0 0 14.4 14.4"><circle cx="7.2" cy="7.2" r="6.45" fill="#25324d" stroke="#548af7" stroke-width="1.45"/><path d="M9.7 5.3 a3.1 3.1 0 1 0 0 3.8" fill="none" stroke="#548af7" stroke-width="1.35" stroke-linecap="butt"/></svg><svg style="position:absolute;left:243.9px;top:523.8px" width="14.4" height="14.4" viewBox="0 0 14.4 14.4"><circle cx="7.2" cy="7.2" r="6.45" fill="#25324d" stroke="#548af7" stroke-width="1.45"/><path d="M9.7 5.3 a3.1 3.1 0 1 0 0 3.8" fill="none" stroke="#548af7" stroke-width="1.35" stroke-linecap="butt"/></svg><svg style="position:absolute;left:243.9px;top:543.8px" width="14.4" height="14.4" viewBox="0 0 14.4 14.4"><circle cx="7.2" cy="7.2" r="6.45" fill="#25324d" stroke="#548af7" stroke-width="1.45"/><path d="M9.7 5.3 a3.1 3.1 0 1 0 0 3.8" fill="none" stroke="#548af7" stroke-width="1.35" stroke-linecap="butt"/></svg><svg style="position:absolute;left:243.9px;top:563.8px" width="14.4" height="14.4" viewBox="0 0 14.4 14.4"><circle cx="7.2" cy="7.2" r="6.45" fill="#25324d" stroke="#548af7" stroke-width="1.45"/><path d="M9.7 5.3 a3.1 3.1 0 1 0 0 3.8" fill="none" stroke="#548af7" stroke-width="1.35" stroke-linecap="butt"/></svg><svg style="position:absolute;left:243.9px;top:583.8px" width="14.4" height="14.4" viewBox="0 0 14.4 14.4"><circle cx="7.2" cy="7.2" r="6.45" fill="#25324d" stroke="#548af7" stroke-width="1.45"/><path d="M9.7 5.3 a3.1 3.1 0 1 0 0 3.8" fill="none" stroke="#548af7" stroke-width="1.35" stroke-linecap="butt"/></svg><svg style="position:absolute;left:243.9px;top:603.8px" width="14.4" height="14.4" viewBox="0 0 14.4 14.4"><circle cx="7.2" cy="7.2" r="6.45" fill="#25324d" stroke="#548af7" stroke-width="1.45"/><path d="M9.7 5.3 a3.1 3.1 0 1 0 0 3.8" fill="none" stroke="#548af7" stroke-width="1.35" stroke-linecap="butt"/></svg><svg style="position:absolute;left:243.9px;top:623.8px" width="14.4" height="14.4" viewBox="0 0 14.4 14.4"><circle cx="7.2" cy="7.2" r="6.45" fill="#25324d" stroke="#548af7" stroke-width="1.45"/><path d="M9.7 5.3 a3.1 3.1 0 1 0 0 3.8" fill="none" stroke="#548af7" stroke-width="1.35" stroke-linecap="butt"/></svg><div style="position:absolute;left:51px;top:641px;width:441px;height:20px;border-radius:4px;background:#0d293e"></div><svg style="position:absolute;left:243.9px;top:643.8px" width="14.4" height="14.4" viewBox="0 0 14.4 14.4"><circle cx="7.2" cy="7.2" r="6.45" fill="#253627" stroke="#57965c" stroke-width="1.4"/><path d="M5.6 3.9 h3.2 v0.9 l-0.9 0.6 v3.6 l0.9 0.6 v0.9 h-3.2 v-0.9 l0.9 -0.6 v-3.6 l-0.9 -0.6 z" fill="#57965c"/></svg><svg style="position:absolute;left:243.9px;top:663.8px" width="14.4" height="14.4" viewBox="0 0 14.4 14.4"><circle cx="7.2" cy="7.2" r="6.45" fill="#25324d" stroke="#548af7" stroke-width="1.45"/><path d="M9.7 5.3 a3.1 3.1 0 1 0 0 3.8" fill="none" stroke="#548af7" stroke-width="1.35" stroke-linecap="butt"/></svg><svg style="position:absolute;left:243.9px;top:683.8px" width="14.4" height="14.4" viewBox="0 0 14.4 14.4"><circle cx="7.2" cy="7.2" r="6.45" fill="#25324d" stroke="#548af7" stroke-width="1.45"/><path d="M9.7 5.3 a3.1 3.1 0 1 0 0 3.8" fill="none" stroke="#548af7" stroke-width="1.35" stroke-linecap="butt"/></svg><svg style="position:absolute;left:243.9px;top:703.8px" width="14.4" height="14.4" viewBox="0 0 14.4 14.4"><circle cx="7.2" cy="7.2" r="6.45" fill="#25324d" stroke="#548af7" stroke-width="1.45"/><path d="M9.7 5.3 a3.1 3.1 0 1 0 0 3.8" fill="none" stroke="#548af7" stroke-width="1.35" stroke-linecap="butt"/></svg>
 <span style="position:absolute;left:118.4px;top:41.55px;line-height:20px;height:20px;font-size:13.5px;font-weight:700;color:#c3c5c8;letter-spacing:0.131px;white-space:pre;-webkit-text-stroke:0.1px #c3c5c8">yudao-module-trade-biz</span><span style="position:absolute;left:136.6px;top:61.55px;line-height:20px;height:20px;font-size:13.5px;font-weight:400;color:#c3c5c8;letter-spacing:0.200px;white-space:pre;-webkit-text-stroke:0.22px #c3c5c8">src</span><span style="position:absolute;left:154.6px;top:81.55px;line-height:20px;height:20px;font-size:13.5px;font-weight:400;color:#c3c5c8;letter-spacing:-0.166px;white-space:pre;-webkit-text-stroke:0.22px #c3c5c8">main</span><span style="position:absolute;left:172.4px;top:101.55px;line-height:20px;height:20px;font-size:13.5px;font-weight:400;color:#c3c5c8;letter-spacing:-0.241px;white-space:pre;-webkit-text-stroke:0.22px #c3c5c8">java</span><span style="position:absolute;left:190.4px;top:121.55px;line-height:20px;height:20px;font-size:13.5px;font-weight:400;color:#c3c5c8;letter-spacing:0.199px;white-space:pre;-webkit-text-stroke:0.22px #c3c5c8">cn.iocoder.yudao.module.trade</span><span style="position:absolute;left:208.5px;top:141.55px;line-height:20px;height:20px;font-size:13.5px;font-weight:400;color:#c3c5c8;letter-spacing:-0.039px;white-space:pre;-webkit-text-stroke:0.22px #c3c5c8">api</span><span style="position:absolute;left:208.5px;top:161.55px;line-height:20px;height:20px;font-size:13.5px;font-weight:400;color:#c3c5c8;letter-spacing:0.207px;white-space:pre;-webkit-text-stroke:0.22px #c3c5c8">controller</span><span style="position:absolute;left:208.5px;top:181.55px;line-height:20px;height:20px;font-size:13.5px;font-weight:400;color:#c3c5c8;letter-spacing:0.288px;white-space:pre;-webkit-text-stroke:0.22px #c3c5c8">convert</span><span style="position:absolute;left:208.5px;top:201.55px;line-height:20px;height:20px;font-size:13.5px;font-weight:400;color:#c3c5c8;letter-spacing:-0.039px;white-space:pre;-webkit-text-stroke:0.22px #c3c5c8">dal</span><span style="position:absolute;left:208.5px;top:221.55px;line-height:20px;height:20px;font-size:13.5px;font-weight:400;color:#c3c5c8;letter-spacing:0.232px;white-space:pre;-webkit-text-stroke:0.22px #c3c5c8">framework</span><span style="position:absolute;left:207.8px;top:241.55px;line-height:20px;height:20px;font-size:13.5px;font-weight:400;color:#c3c5c8;letter-spacing:0.261px;white-space:pre;-webkit-text-stroke:0.22px #c3c5c8">job</span><span style="position:absolute;left:208.5px;top:261.55px;line-height:20px;height:20px;font-size:13.5px;font-weight:400;color:#c3c5c8;letter-spacing:0.133px;white-space:pre;-webkit-text-stroke:0.22px #c3c5c8">service</span><span style="position:absolute;left:226.5px;top:281.55px;line-height:20px;height:20px;font-size:13.5px;font-weight:400;color:#c3c5c8;letter-spacing:0.169px;white-space:pre;-webkit-text-stroke:0.22px #c3c5c8">aftersale</span><span style="position:absolute;left:226.5px;top:301.55px;line-height:20px;height:20px;font-size:13.5px;font-weight:400;color:#c3c5c8;letter-spacing:0.189px;white-space:pre;-webkit-text-stroke:0.22px #c3c5c8">brokerage</span><span style="position:absolute;left:226.5px;top:321.55px;line-height:20px;height:20px;font-size:13.5px;font-weight:400;color:#c3c5c8;letter-spacing:0.296px;white-space:pre;-webkit-text-stroke:0.22px #c3c5c8">cart</span><span style="position:absolute;left:226.5px;top:341.55px;line-height:20px;height:20px;font-size:13.5px;font-weight:400;color:#c3c5c8;letter-spacing:0.295px;white-space:pre;-webkit-text-stroke:0.22px #c3c5c8">config</span><span style="position:absolute;left:226.5px;top:361.55px;line-height:20px;height:20px;font-size:13.5px;font-weight:400;color:#c3c5c8;letter-spacing:0.146px;white-space:pre;-webkit-text-stroke:0.22px #c3c5c8">delivery</span><span style="position:absolute;left:226.5px;top:381.55px;line-height:20px;height:20px;font-size:13.5px;font-weight:400;color:#c3c5c8;letter-spacing:0.003px;white-space:pre;-webkit-text-stroke:0.22px #c3c5c8">message</span><span style="position:absolute;left:226.5px;top:401.55px;line-height:20px;height:20px;font-size:13.5px;font-weight:400;color:#c3c5c8;letter-spacing:0.137px;white-space:pre;-webkit-text-stroke:0.22px #c3c5c8">order</span><span style="position:absolute;left:226.5px;top:421.55px;line-height:20px;height:20px;font-size:13.5px;font-weight:400;color:#c3c5c8;letter-spacing:0.167px;white-space:pre;-webkit-text-stroke:0.22px #c3c5c8">price</span><span style="position:absolute;left:244.5px;top:441.55px;line-height:20px;height:20px;font-size:13.5px;font-weight:400;color:#c3c5c8;letter-spacing:0.334px;white-space:pre;-webkit-text-stroke:0.22px #c3c5c8">bo</span><span style="position:absolute;left:244.5px;top:461.55px;line-height:20px;height:20px;font-size:13.5px;font-weight:400;color:#c3c5c8;letter-spacing:0.192px;white-space:pre;-webkit-text-stroke:0.22px #c3c5c8">calculator</span><span style="position:absolute;left:262.6px;top:481.55px;line-height:20px;height:20px;font-size:13.5px;font-weight:400;color:#c3c5c8;letter-spacing:0.166px;white-space:pre;-webkit-text-stroke:0.22px #c3c5c8">TradeBargainActivityPriceCalculator</span><span style="position:absolute;left:262.6px;top:501.55px;line-height:20px;height:20px;font-size:13.5px;font-weight:400;color:#c3c5c8;letter-spacing:0.155px;white-space:pre;-webkit-text-stroke:0.22px #c3c5c8">TradeCombinationActivityPriceCalculator</span><span style="position:absolute;left:262.6px;top:521.55px;line-height:20px;height:20px;font-size:13.5px;font-weight:400;color:#c3c5c8;letter-spacing:0.119px;white-space:pre;-webkit-text-stroke:0.22px #c3c5c8">TradeCouponPriceCalculator</span><span style="position:absolute;left:262.6px;top:541.55px;line-height:20px;height:20px;font-size:13.5px;font-weight:400;color:#c3c5c8;letter-spacing:0.130px;white-space:pre;-webkit-text-stroke:0.22px #c3c5c8">TradeDeliveryPriceCalculator</span><span style="position:absolute;left:262.6px;top:561.55px;line-height:20px;height:20px;font-size:13.5px;font-weight:400;color:#c3c5c8;letter-spacing:0.198px;white-space:pre;-webkit-text-stroke:0.22px #c3c5c8">TradeDiscountActivityPriceCalculator</span><span style="position:absolute;left:262.6px;top:581.55px;line-height:20px;height:20px;font-size:13.5px;font-weight:400;color:#c3c5c8;letter-spacing:0.139px;white-space:pre;-webkit-text-stroke:0.22px #c3c5c8">TradeMemberLevelPriceCalculator</span><span style="position:absolute;left:262.6px;top:601.55px;line-height:20px;height:20px;font-size:13.5px;font-weight:400;color:#c3c5c8;letter-spacing:0.097px;white-space:pre;-webkit-text-stroke:0.22px #c3c5c8">TradePointGiveCalculator</span><span style="position:absolute;left:262.6px;top:621.55px;line-height:20px;height:20px;font-size:13.5px;font-weight:400;color:#c3c5c8;letter-spacing:0.119px;white-space:pre;-webkit-text-stroke:0.22px #c3c5c8">TradePointUsePriceCalculator</span><span style="position:absolute;left:262.6px;top:641.55px;line-height:20px;height:20px;font-size:13.5px;font-weight:400;color:#c3c5c8;letter-spacing:0.129px;white-space:pre;-webkit-text-stroke:0.22px #c3c5c8">TradePriceCalculator</span><span style="position:absolute;left:262.6px;top:661.55px;line-height:20px;height:20px;font-size:13.5px;font-weight:400;color:#c3c5c8;letter-spacing:0.128px;white-space:pre;-webkit-text-stroke:0.22px #c3c5c8">TradePriceCalculatorHelper</span><span style="position:absolute;left:262.6px;top:681.55px;line-height:20px;height:20px;font-size:13.5px;font-weight:400;color:#c3c5c8;letter-spacing:0.171px;white-space:pre;-webkit-text-stroke:0.22px #c3c5c8">TradeRewardActivityPriceCalculator</span><span style="position:absolute;left:262.6px;top:701.55px;line-height:20px;height:20px;font-size:13.5px;font-weight:400;color:#c3c5c8;letter-spacing:0.189px;white-space:pre;-webkit-text-stroke:0.22px #c3c5c8">TradeSeckillActivityPriceCalculator</span>
 <svg style="position:absolute;left:225.9px;top:723.7px" width="14.4" height="14.4" viewBox="0 0 14.4 14.4"><circle cx="7.2" cy="7.2" r="6.45" fill="#253627" stroke="#57965c" stroke-width="1.4"/></svg>
 </div>
</div>
<div class="abs" style="left:40px;top:0;width:464px;height:41px;background:#3c3f41"></div>
<div class="abs" style="left:40px;top:40.6px;width:464px;height:1.2px;background:#2e3032"></div>
<svg style="position:absolute;left:99.2px;top:14px" width="16" height="14" viewBox="0 0 16 14"><path d="M4.4 5.8 L8 9.5 L11.6 5.8" fill="none" stroke="#b4b8bf" stroke-width="1.2" stroke-linecap="round" stroke-linejoin="round"/></svg><svg style="position:absolute;left:371px;top:12.6px" width="16" height="16" viewBox="0 0 16 16"><circle cx="8" cy="8" r="6.5" fill="none" stroke="#c3c5c8" stroke-width="1.2"/><path d="M8 1.5 v3.2 M8 11.3 v3.2 M1.5 8 h3.2 M11.3 8 h3.2" stroke="#c3c5c8" stroke-width="1.2"/></svg><svg style="position:absolute;left:397px;top:12.6px" width="16" height="16" viewBox="0 0 16 16"><path d="M4 6.2 L8 2.4 L12 6.2 M4 9.8 L8 13.6 L12 9.8" fill="none" stroke="#c3c5c8" stroke-width="1.2" stroke-linecap="round" stroke-linejoin="round"/></svg><svg style="position:absolute;left:423px;top:12.6px" width="16" height="16" viewBox="0 0 16 16"><path d="M4 2.4 L8 6.2 L12 2.4 M4 13.6 L8 9.8 L12 13.6" fill="none" stroke="#c3c5c8" stroke-width="1.2" stroke-linecap="round" stroke-linejoin="round"/></svg><svg style="position:absolute;left:449px;top:12.6px" width="16" height="16" viewBox="0 0 16 16"><circle cx="8" cy="3" r="1.2" fill="#c3c5c8"/><circle cx="8" cy="8" r="1.2" fill="#c3c5c8"/><circle cx="8" cy="13" r="1.2" fill="#c3c5c8"/></svg><svg style="position:absolute;left:475px;top:12.6px" width="16" height="16" viewBox="0 0 16 16"><path d="M1.6 8 h12.8" stroke="#c3c5c8" stroke-width="1.3" stroke-linecap="round"/></svg>
<span style="position:absolute;left:51.5px;top:11.45px;line-height:20px;height:20px;font-size:14px;font-weight:700;color:#c6c8cc;letter-spacing:-0.396px;white-space:pre;-webkit-text-stroke:0.1px #c6c8cc">Project</span><span style="position:absolute;left:538.5px;top:11.55px;line-height:20px;height:20px;font-size:13.5px;font-weight:400;color:#c8cace;letter-spacing:0.124px;white-space:pre;-webkit-text-stroke:0.22px #c8cace">TradePriceCalculator</span>
<!-- left stripe -->
<div class="abs" style="left:0;top:0;width:40px;height:726px;background:#3b3d40"></div>
<div class="abs" style="left:38.4px;top:0;width:1.2px;height:726px;background:#2e3032"></div>
<div class="abs" style="left:0;top:0;width:1.2px;height:726px;background:#303234"></div>
<div style="position:absolute;left:3.3px;top:5.6px;width:30.2px;height:30.4px;border-radius:7px;background:#595c5f"></div><svg style="position:absolute;left:8px;top:10px" width="20" height="20" viewBox="0 0 20 20"><path d="M1.7 5.2 a1.9 1.9 0 0 1 1.9 -1.9 h3.8 l2.6 2.7 h6.5 a1.9 1.9 0 0 1 1.9 1.9 v8 a1.9 1.9 0 0 1 -1.9 1.9 h-12.9 a1.9 1.9 0 0 1 -1.9 -1.9 z" fill="none" stroke="#ced0d3" stroke-width="1.35"/></svg><svg style="position:absolute;left:8px;top:50.4px" width="21" height="20" viewBox="0 0 21 20"><path d="M0.2 10 h6.2 M14 10 h6.3" stroke="#c3c5c8" stroke-width="1.5" stroke-linecap="round"/><circle cx="10.2" cy="10" r="3.5" fill="none" stroke="#c3c5c8" stroke-width="1.5"/></svg><svg style="position:absolute;left:7.05px;top:89.95px" width="22" height="21" viewBox="0 0 22 21"><circle cx="7.05" cy="6.05" r="3.4" fill="none" stroke="#c3c5c8" stroke-width="1.5"/><path d="M11.9 5.2 a3.3 3.3 0 0 1 6.4 1.1 v0.9" fill="none" stroke="#c3c5c8" stroke-width="1.5"/><path d="M3.4 9.5 C1.3 10.9 0.8 14 2.6 15.9 C4.2 17.5 6.4 18.1 8.5 18.3 L8.7 16.8 C6.6 16.4 5.2 15.2 5 13.6 C4.9 12.4 4.9 11.4 5.1 10.3 Z" fill="#c3c5c8"/><circle cx="14.8" cy="14.05" r="5.5" fill="#c3c5c8"/><path d="M13 12.5 a1.85 1.85 0 1 1 2.6 1.7 c-0.6 0.3 -0.8 0.6 -0.8 1.2" fill="none" stroke="#3a3c3e" stroke-width="1.3"/><circle cx="14.8" cy="17.2" r="0.85" fill="#3a3c3e"/></svg><svg style="position:absolute;left:8px;top:130.5px" width="21" height="20" viewBox="0 0 21 20"><circle cx="4.6" cy="3.8" r="2.45" fill="none" stroke="#c3c5c8" stroke-width="1.5"/><circle cx="4.6" cy="15.8" r="2.45" fill="none" stroke="#c3c5c8" stroke-width="1.5"/><circle cx="16" cy="15.8" r="2.45" fill="none" stroke="#c3c5c8" stroke-width="1.5"/><path d="M4.6 6.1 v7.4 M16 13.5 v-6 a3 3 0 0 0 -3 -3 h-2.6 M13 1.7 l-2.8 2.8 l2.8 2.8" fill="none" stroke="#c3c5c8" stroke-width="1.5" stroke-linecap="round" stroke-linejoin="round"/></svg><div style="position:absolute;left:6px;top:166px;width:24px;height:1px;background:#404346"></div><svg style="position:absolute;left:9px;top:182.5px" width="19" height="18" viewBox="0 0 19 18"><rect x="1.7" y="1.6" width="5.6" height="5.6" rx="1.3" fill="none" stroke="#c3c5c8" stroke-width="1.5"/><rect x="1.7" y="10.4" width="5.6" height="5.6" rx="1.3" fill="none" stroke="#c3c5c8" stroke-width="1.5"/><rect x="10.6" y="10.4" width="5.6" height="5.6" rx="1.3" fill="none" stroke="#c3c5c8" stroke-width="1.5"/></svg><svg style="position:absolute;left:9px;top:228px" width="20" height="7" viewBox="0 0 20 7"><circle cx="2.8" cy="3.4" r="1.5" fill="#c3c5c8"/><circle cx="9.2" cy="3.4" r="1.5" fill="#c3c5c8"/><circle cx="15.7" cy="3.4" r="1.5" fill="#c3c5c8"/></svg>
<div class="abs" style="left:0;top:0;width:1627px;height:1px;background:#333537"></div>
<!-- pink highlight -->
<div class="abs" style="left:494.6px;top:456.1px;width:1121.2px;height:157.6px;border:6.3px solid #f83970;border-bottom-width:6.9px;box-sizing:content-box"></div>
</div></body></html>
